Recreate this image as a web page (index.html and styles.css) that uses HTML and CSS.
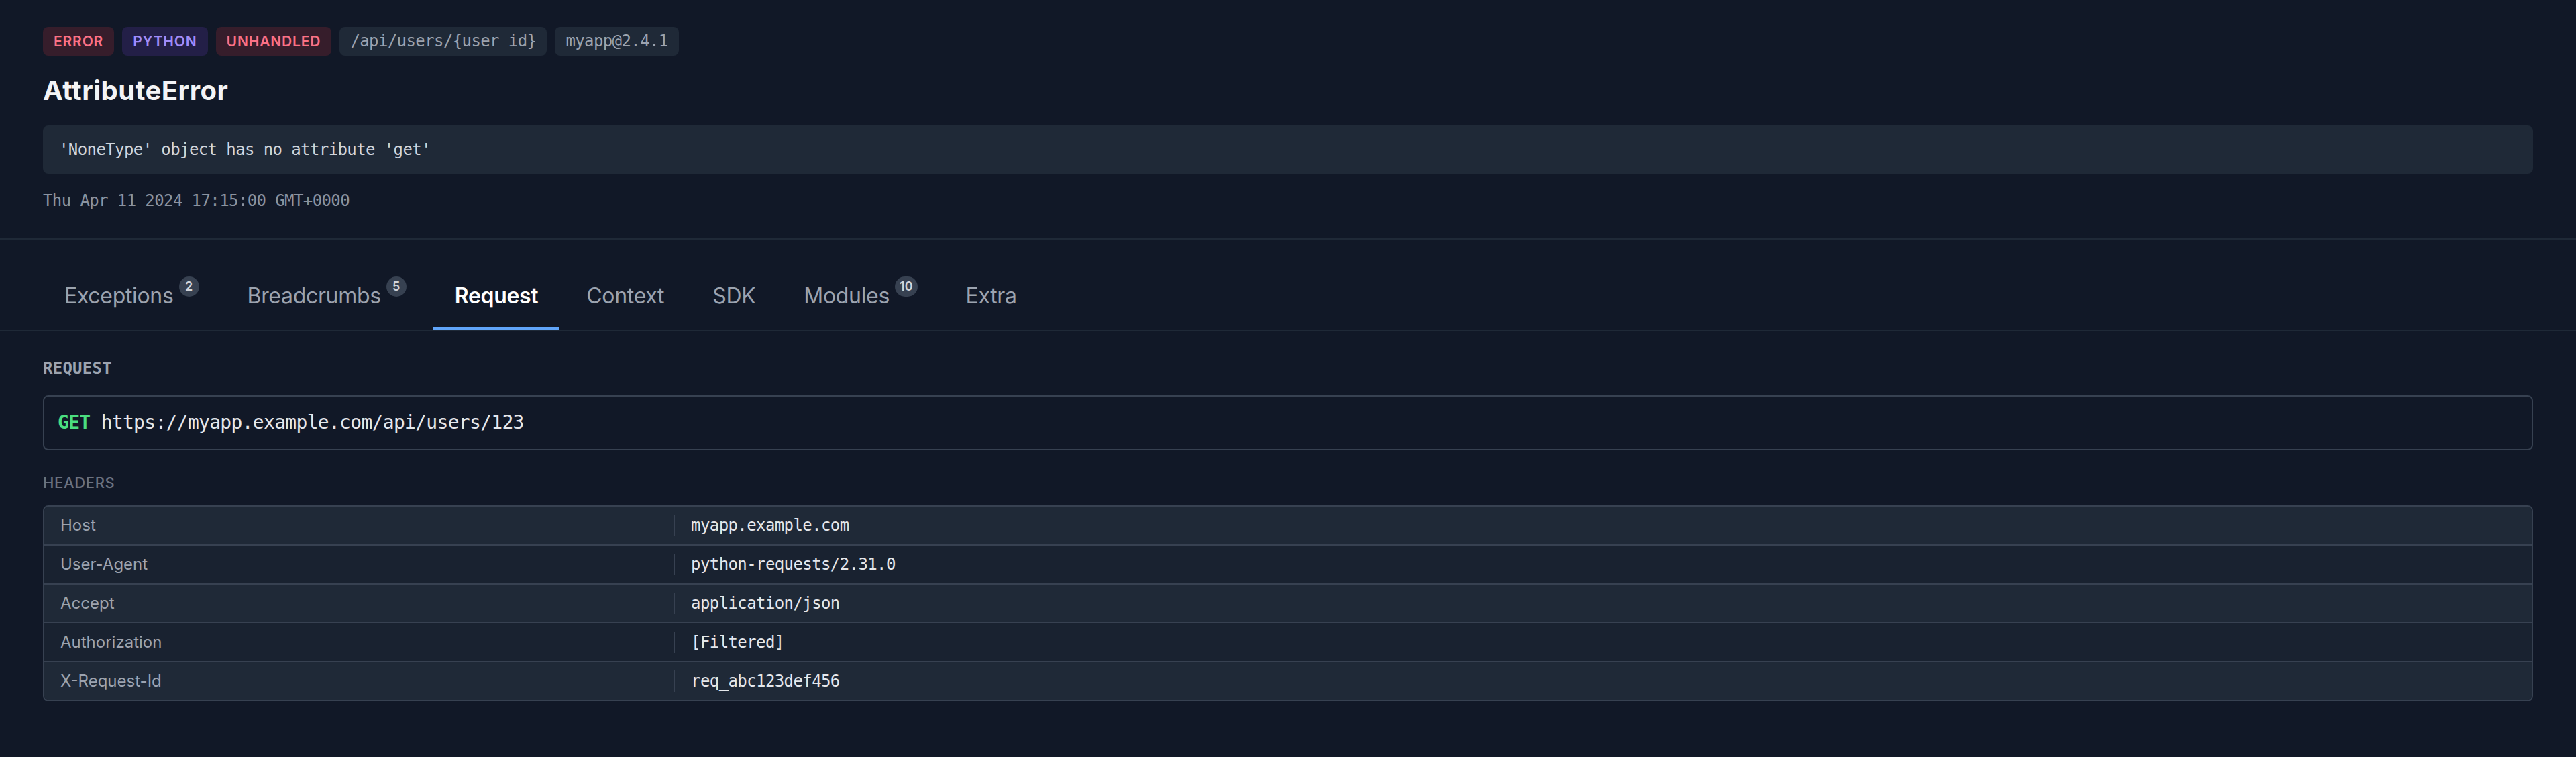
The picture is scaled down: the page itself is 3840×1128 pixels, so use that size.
FILE: index.html
```html
<!DOCTYPE html>
<html lang="en">
<head>
<meta charset="utf-8">
<title>AttributeError</title>
<link rel="stylesheet" href="styles.css">
</head>
<body>
<div class="page">
  <header class="event-header">
    <div class="badges">
      <span class="badge badge-error">Error</span>
      <span class="badge badge-python">Python</span>
      <span class="badge badge-error">Unhandled</span>
      <span class="badge badge-mono">/api/users/{user_id}</span>
      <span class="badge badge-mono">myapp@2.4.1</span>
    </div>
    <h1 class="title">AttributeError</h1>
    <div class="message">'NoneType' object has no attribute 'get'</div>
    <div class="timestamp">Thu Apr 11 2024 17:15:00 GMT+0000</div>
  </header>

  <nav class="tabs">
    <div class="tab">Exceptions<span class="count">2</span></div>
    <div class="tab">Breadcrumbs<span class="count">5</span></div>
    <div class="tab active">Request</div>
    <div class="tab">Context</div>
    <div class="tab">SDK</div>
    <div class="tab">Modules<span class="count">10</span></div>
    <div class="tab">Extra</div>
  </nav>

  <section class="panel">
    <h2 class="section-label">Request</h2>
    <div class="url-box"><span class="method">GET</span> https://myapp.example.com/api/users/123</div>

    <h3 class="sub-label">Headers</h3>
    <div class="kv-table">
      <div class="kv-row"><div class="kv-key">Host</div><div class="kv-value">myapp.example.com</div></div>
      <div class="kv-row"><div class="kv-key">User-Agent</div><div class="kv-value">python-requests/2.31.0</div></div>
      <div class="kv-row"><div class="kv-key">Accept</div><div class="kv-value">application/json</div></div>
      <div class="kv-row"><div class="kv-key">Authorization</div><div class="kv-value">[Filtered]</div></div>
      <div class="kv-row"><div class="kv-key">X-Request-Id</div><div class="kv-value">req_abc123def456</div></div>
    </div>
  </section>
</div>
</body>
</html>
```
FILE: styles.css
```css
* { box-sizing: border-box; }

html, body {
  margin: 0;
  background: #111827;
}

body {
  font-family: Inter, "Noto Sans", sans-serif;
  color: #e5e7eb;
}

.event-header {
  padding: 40px 64px 40px;
  border-bottom: 2px solid #1f2937;
}

.badges {
  display: flex;
  gap: 12px;
}

.badge {
  display: inline-block;
  padding: 8px 16px;
  font-size: 21px;
  line-height: 27px;
  font-weight: 600;
  letter-spacing: 0.04em;
  text-transform: uppercase;
  border-radius: 8px;
}

.badge-error {
  background: #361d2b;
  color: #fb7185;
}

.badge-python {
  background: #231f47;
  color: #a08cfa;
}

.badge-mono {
  background: #1f2937;
  color: #9ca3af;
  font-family: "DejaVu Sans Mono", monospace;
  font-size: 24px;
  font-weight: 400;
  letter-spacing: -0.025em;
  text-transform: none;
}

.title {
  margin: 24px 0 0;
  font-size: 40px;
  line-height: 56px;
  font-weight: 700;
  letter-spacing: 0.5px;
  color: #f3f4f6;
}

.message {
  margin-top: 24px;
  padding: 20px 24px;
  background: #1f2937;
  border-radius: 8px;
  font-family: "DejaVu Sans Mono", monospace;
  font-size: 24px;
  line-height: 32px;
  letter-spacing: -0.025em;
  color: #d1d5db;
}

.timestamp {
  margin-top: 24px;
  font-family: "DejaVu Sans Mono", monospace;
  font-size: 24px;
  line-height: 32px;
  letter-spacing: -0.025em;
  color: #8b93a0;
}

.tabs {
  display: flex;
  gap: 8px;
  padding: 38px 64px 0;
  border-bottom: 2px solid #1f2937;
}

.tab {
  display: flex;
  align-items: flex-start;
  padding: 26px 32px;
  border-bottom: 4px solid transparent;
  font-size: 32px;
  line-height: 40px;
  letter-spacing: -0.01em;
  color: #9ca3af;
}

.tab.active {
  color: #ffffff;
  font-weight: 600;
  border-bottom-color: #60a5fa;
}

.count {
  margin-left: 8px;
  margin-top: -9px;
  min-width: 30px;
  height: 30px;
  padding: 0 7px;
  border-radius: 15px;
  background: #374151;
  color: #d1d5db;
  font-size: 18px;
  line-height: 30px;
  font-weight: 600;
  letter-spacing: 0;
  text-align: center;
}

.panel {
  padding: 40px 64px;
}

.section-label {
  margin: 0;
  font-family: "DejaVu Sans Mono", monospace;
  font-size: 24px;
  line-height: 32px;
  font-weight: 700;
  letter-spacing: 0.01em;
  text-transform: uppercase;
  color: #9ca3af;
}

.url-box {
  margin-top: 24px;
  padding: 18px 20px;
  border: 2px solid #374151;
  border-radius: 8px;
  font-family: "DejaVu Sans Mono", monospace;
  font-size: 28px;
  line-height: 42px;
  letter-spacing: -0.025em;
  color: #e5e7eb;
}

.method {
  color: #4ade80;
  font-weight: 700;
}

.sub-label {
  margin: 32px 0 18px;
  font-size: 22px;
  line-height: 32px;
  font-weight: 500;
  letter-spacing: 0.03em;
  text-transform: uppercase;
  color: #6b7280;
}

.kv-table {
  border: 2px solid #374151;
  border-radius: 8px;
  overflow: hidden;
}

.kv-row {
  display: grid;
  grid-template-columns: 25.3% 1fr;
  padding: 12px 0;
  background: #1f2937;
  border-bottom: 2px solid #374151;
}

.kv-row:nth-child(even) {
  background: #192230;
}

.kv-row:last-child {
  border-bottom: none;
}

.kv-key {
  padding: 0 24px;
  font-size: 24px;
  line-height: 32px;
  color: #9ca3af;
}

.kv-value {
  padding: 0 24px;
  border-left: 2px solid #374151;
  font-family: "DejaVu Sans Mono", monospace;
  font-size: 24px;
  line-height: 32px;
  letter-spacing: -0.025em;
  color: #e5e7eb;
}
```
